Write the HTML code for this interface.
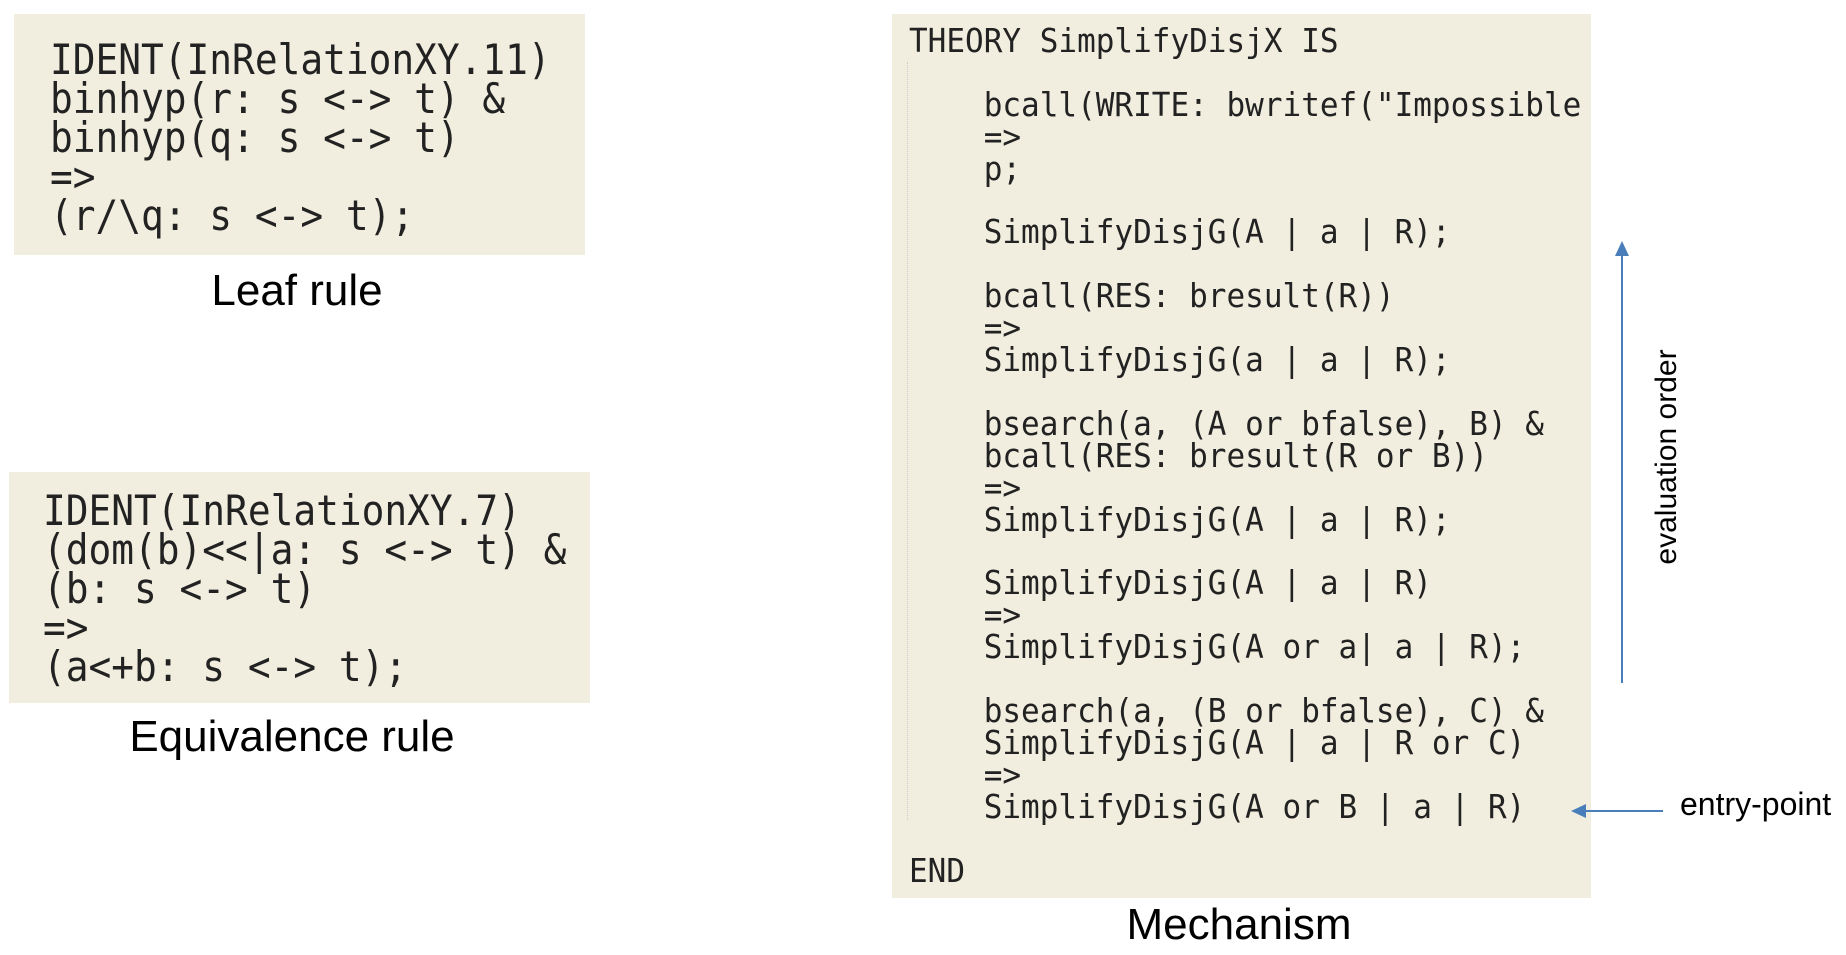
<!DOCTYPE html>
<html><head><meta charset="utf-8"><style>
body{margin:0;width:1846px;height:955px;background:#fff;position:relative;overflow:hidden;font-family:"Liberation Sans",sans-serif}
.box{position:absolute;background:#f2eedf}
pre{margin:0;position:absolute;font-family:"DejaVu Sans Mono","Liberation Mono",monospace;color:#222;white-space:pre}
.cap{position:absolute;transform:translateX(-50%);font-size:44px;color:#000;white-space:nowrap}
</style></head><body>
<div class="box" style="left:14px;top:14px;width:571px;height:241px"></div>
<pre style="left:50px;top:40px;font-size:42px;line-height:39px;transform-origin:0 0;transform:scaleX(0.9)">IDENT(InRelationXY.11)
binhyp(r: s &lt;-&gt; t) &amp;
binhyp(q: s &lt;-&gt; t)
=&gt;
(r/\q: s &lt;-&gt; t);</pre>
<div class="cap" style="left:297px;top:266px">Leaf rule</div>

<div class="box" style="left:9px;top:472px;width:581px;height:231px"></div>
<pre style="left:43px;top:491px;font-size:42px;line-height:39px;transform-origin:0 0;transform:scaleX(0.9)">IDENT(InRelationXY.7)
(dom(b)&lt;&lt;|a: s &lt;-&gt; t) &amp;
(b: s &lt;-&gt; t)
=&gt;
(a&lt;+b: s &lt;-&gt; t);</pre>
<div class="cap" style="left:292px;top:712px">Equivalence rule</div>

<div class="box" style="left:892px;top:14px;width:699px;height:884px"></div>
<div style="position:absolute;left:907px;top:62px;height:758px;border-left:1px dotted #ccc"></div>
<div style="position:absolute;left:892px;top:14px;width:699px;height:884px;overflow:hidden">
<pre style="left:17px;top:11px;font-size:33px;line-height:31.9px;transform-origin:0 0;transform:scaleX(0.94)">THEORY SimplifyDisjX IS

    bcall(WRITE: bwritef("Impossible
    =&gt;
    p;

    SimplifyDisjG(A | a | R);

    bcall(RES: bresult(R))
    =&gt;
    SimplifyDisjG(a | a | R);

    bsearch(a, (A or bfalse), B) &amp;
    bcall(RES: bresult(R or B))
    =&gt;
    SimplifyDisjG(A | a | R);

    SimplifyDisjG(A | a | R)
    =&gt;
    SimplifyDisjG(A or a| a | R);

    bsearch(a, (B or bfalse), C) &amp;
    SimplifyDisjG(A | a | R or C)
    =&gt;
    SimplifyDisjG(A or B | a | R)

END</pre></div>
<div class="cap" style="left:1239px;top:900px">Mechanism</div>

<svg style="position:absolute;left:0;top:0" width="1846" height="955">
<line x1="1622" y1="256" x2="1622" y2="683" stroke="#4a7ebb" stroke-width="2"/>
<polygon points="1622,241 1615,256 1629,256" fill="#4a7ebb"/>
<line x1="1663" y1="811" x2="1585" y2="811" stroke="#4a7ebb" stroke-width="2"/>
<polygon points="1571,811 1586,804 1586,818" fill="#4a7ebb"/>
</svg>
<div style="position:absolute;left:1680px;top:786px;font-size:32px">entry-point</div>
<div style="position:absolute;left:1667px;top:457px;font-size:30px;white-space:nowrap;transform:translate(-50%,-50%) rotate(-90deg)">evaluation order</div>
</body></html>
